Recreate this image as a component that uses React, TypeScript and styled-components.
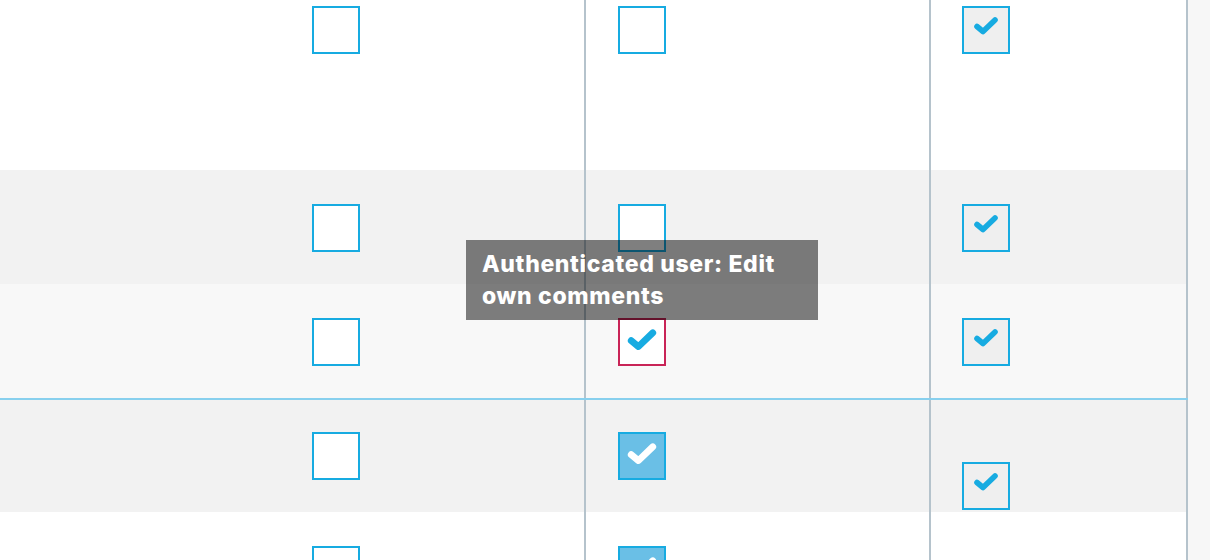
import React from "react";
import styled, { createGlobalStyle, css } from "styled-components";

const Global = createGlobalStyle`
  html, body { margin: 0; padding: 0; }
  body {
    background: #f7f7f7;
    font-family: "Liberation Sans", Arial, sans-serif;
    overflow: hidden;
  }
`;

const Page = styled.div`
  position: relative;
  width: 1210px;
  height: 560px;
  overflow: hidden;
  background: #f7f7f7;
`;

const Table = styled.div`
  display: flex;
  flex-direction: column;
  width: 1188px;
`;

const Row = styled.div<{ $bg: string; $h: number; $pt: number; $divider?: boolean }>`
  display: grid;
  grid-template-columns: 280px 306px 345px 257px;
  height: ${(p) => p.$h}px;
  background: ${(p) => p.$bg};
  box-sizing: border-box;
  ${(p) =>
    p.$divider &&
    css`
      border-bottom: 2px solid #88d0ee;
      height: ${p.$h + 2}px;
    `}
  & > div {
    padding-top: ${(p) => p.$pt}px;
  }
`;

const LabelCell = styled.div``;

const Cell = styled.div<{ $pad: number }>`
  box-sizing: border-box;
  padding-left: ${(p) => p.$pad}px;
  border-right: 2px solid #b5c3cc;
  display: flex;
  flex-direction: column;
  align-items: flex-start;
`;

type Variant = "empty" | "checkedGray" | "filled" | "focus";

const Box = styled.span<{ $v: Variant; $offset?: number }>`
  width: 48px;
  height: 48px;
  box-sizing: border-box;
  border: 2px solid #17abe1;
  background: #ffffff;
  display: flex;
  align-items: center;
  justify-content: center;
  margin-top: ${(p) => p.$offset ?? 0}px;
  ${(p) =>
    p.$v === "checkedGray" &&
    css`
      background: #efefef;
    `}
  ${(p) =>
    p.$v === "filled" &&
    css`
      background: #6abfe6;
    `}
  ${(p) =>
    p.$v === "focus" &&
    css`
      border-color: #c92457;
    `}
`;

const CheckSvg = styled.svg<{ $big?: boolean }>`
  width: ${(p) => (p.$big ? 32 : 26)}px;
  height: ${(p) => (p.$big ? 24 : 20)}px;
  margin-top: ${(p) => (p.$big ? -4 : -8)}px;
  display: block;
`;

const Check: React.FC<{ color: string; big?: boolean }> = ({ color, big }) => (
  <CheckSvg $big={big} viewBox="0 0 26 20">
    <polyline
      points="4,10.5 10,15.5 22,4"
      fill="none"
      stroke={color}
      strokeWidth={5.6}
      strokeLinecap="round"
      strokeLinejoin="round"
    />
  </CheckSvg>
);

const Tooltip = styled.div`
  position: absolute;
  left: 466px;
  top: 240px;
  width: 352px;
  height: 80px;
  box-sizing: border-box;
  padding: 8px 8px 8px 16px;
  background: rgba(0, 0, 0, 0.5);
  color: #ffffff;
  font-family: Inter, "Liberation Sans", Arial, sans-serif;
  font-weight: 800;
  font-size: 23px;
  line-height: 32px;
  letter-spacing: 0.65px;
  white-space: nowrap;
`;

const BLUE = "#17abe1";

const Cb: React.FC<{ v: Variant; offset?: number }> = ({ v, offset }) => (
  <Box $v={v} $offset={offset}>
    {v === "checkedGray" && <Check color={BLUE} />}
    {v === "focus" && <Check color={BLUE} big />}
    {v === "filled" && <Check color="#ffffff" big />}
  </Box>
);

export default function App() {
  const rows: {
    bg: string;
    h: number;
    pt: number;
    divider?: boolean;
    cells: [Variant, Variant, Variant | null];
    off3?: number;
  }[] = [
    { bg: "#ffffff", h: 170, pt: 6, cells: ["empty", "empty", "checkedGray"] },
    { bg: "#f2f2f2", h: 114, pt: 34, cells: ["empty", "empty", "checkedGray"] },
    { bg: "#f8f8f8", h: 114, pt: 34, divider: true, cells: ["empty", "focus", "checkedGray"] },
    { bg: "#f2f2f2", h: 112, pt: 32, cells: ["empty", "filled", "checkedGray"], off3: 30 },
    { bg: "#ffffff", h: 120, pt: 34, cells: ["empty", "filled", null] },
  ];
  return (
    <>
      <Global />
      <Page>
        <Table>
          {rows.map((r, i) => (
            <Row key={i} $bg={r.bg} $h={r.h} $pt={r.pt} $divider={r.divider}>
              <LabelCell />
              <Cell $pad={32}>
                <Cb v={r.cells[0]} />
              </Cell>
              <Cell $pad={32}>
                <Cb v={r.cells[1]} />
              </Cell>
              <Cell $pad={31}>{r.cells[2] && <Cb v={r.cells[2]} offset={r.off3} />}</Cell>
            </Row>
          ))}
        </Table>
        <Tooltip>
          Authenticated user: Edit
          <br />
          own comments
        </Tooltip>
      </Page>
    </>
  );
}
